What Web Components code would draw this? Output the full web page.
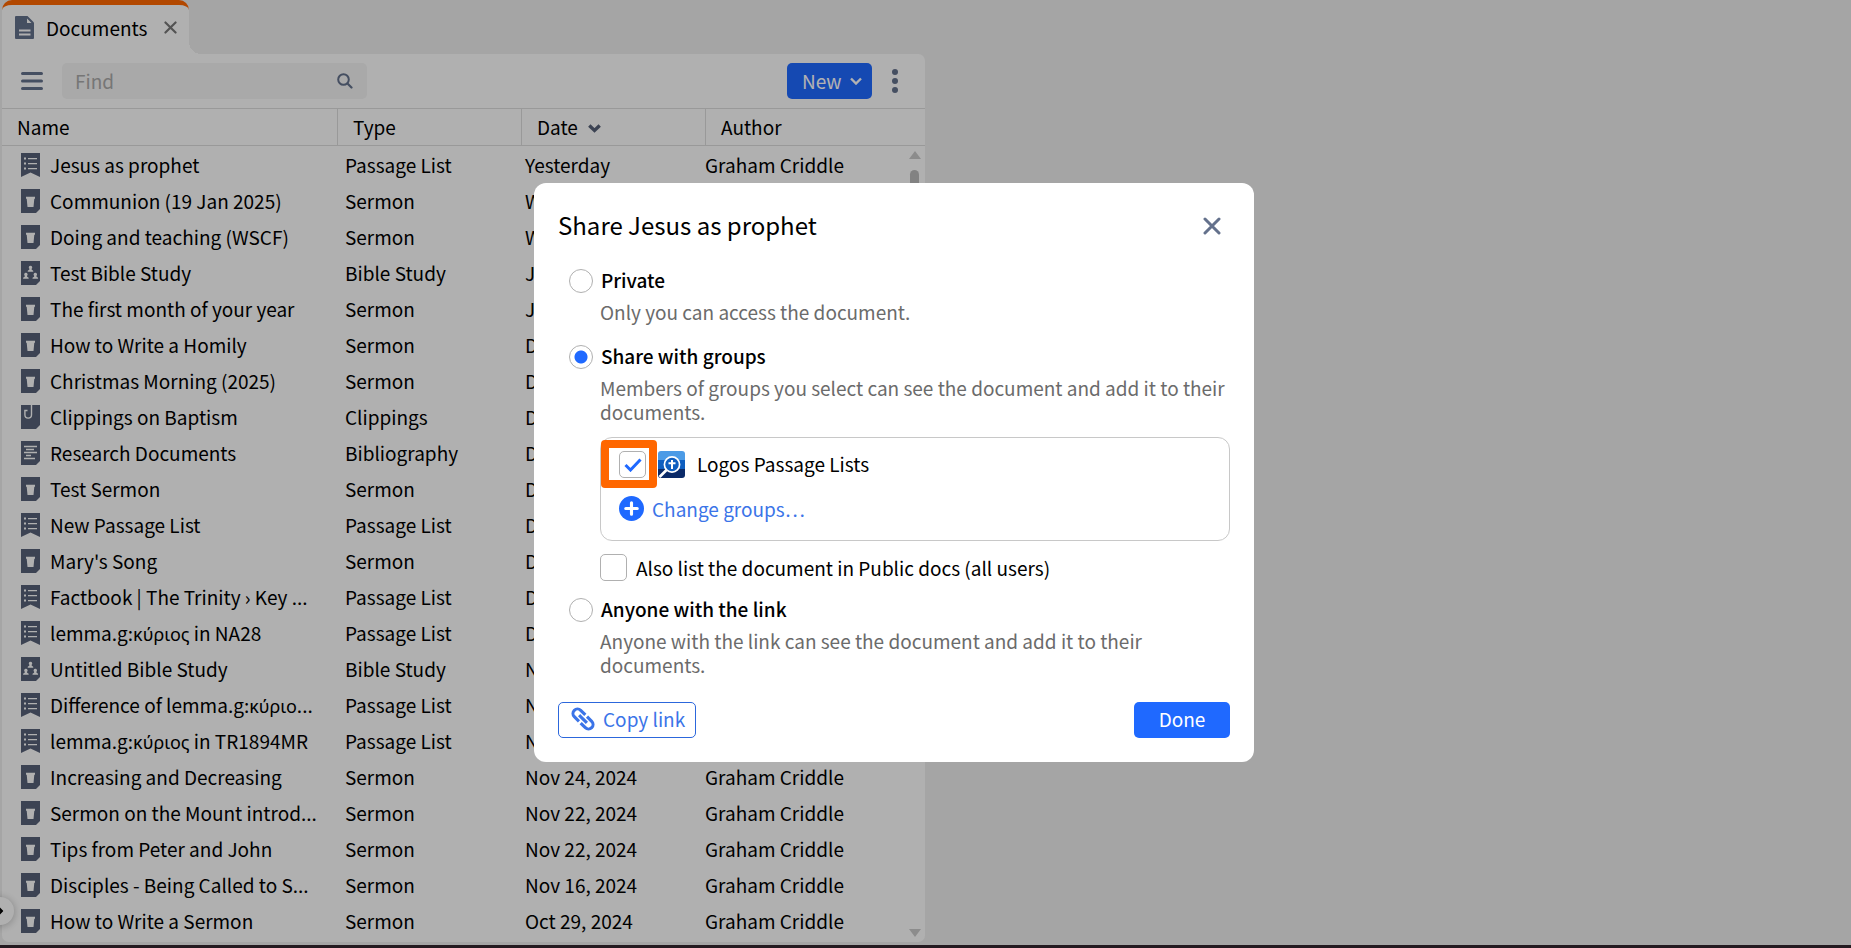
<!DOCTYPE html>
<html lang="en">
<head>
<meta charset="utf-8">
<title>Documents</title>
<style>
  html, body {
    height: 100%;
    margin: 0;
  }

  body {
    font: 19px/24px "Noto Sans CJK SC", "Noto Sans", sans-serif;
    color: #000;
    background: #ededed;
    overflow: hidden;
    --slate: #64718c;
    --slate-dark: #566077;
    --blue: #1f69ff;
    --line: #dcdcdc;
    --panel: #fdfdfd;
  }
</style>
</head>
<body>
<docs-app></docs-app>

<script>
  const icons = {
    document: ['0 0 19 23', `
      <path fill="currentColor" d="M1 0h11.500l6.500 6.500V22a1 1 0 0 1-1 1H1a1 1 0 0 1-1-1V1a1 1 0 0 1 1-1z"/>
      <path fill="#fdfdfd" d="M12 2.500V7h4.500zM4 13.500h11.500v2H4zM4 17.500h11.500v2H4z"/>`],
    passage: ['0 0 19 24', `
      <path fill="currentColor" d="M0 0h19v24l-9.500-4.500L0 24z"/>
      <path fill="#fdfdfd" d="M3 4.500h2v2H3zM7 5h9v1.200H7zM3 9.500h2v2H3zM7 10h9v1.200H7zM3 14.500h2v2H3zM7 15h9v1.200H7z"/>`],
    sermon: ['0 0 19 24', `
      <path fill="currentColor" d="M0 0h19v20l-4 4H0z"/>
      <path fill="#fdfdfd" d="M5 7.800h9v2h-.7L12.500 18h-6L5.700 9.800H5z"/>`],
    study: ['0 0 19 24', `
      <path fill="currentColor" d="M0 0h19v20l-4 4H0z"/>
      <g fill="#fdfdfd">
        <path id="p" d="M9.500 4.800a1.700 1.700 0 0 1 1 3.100l.5 1.200c1 .2 1.300.7 1.300 1.600H6.700c0-.9.300-1.400 1.300-1.600l.5-1.200a1.700 1.700 0 0 1 1-3.100z"/>
        <use href="#p" x="-4.600" y="7"/>
        <use href="#p" x="4.800" y="7"/>
      </g>`],
    clipping: ['0 0 19 24', `
      <path fill="currentColor" d="M0 0h19v20l-4 4H0z"/>
      <path fill="none" stroke="#fdfdfd" stroke-width="1.400" d="M10.500 0v9.800a3.300 3.300 0 0 1-6.600 0V5.500H6.500"/>`],
    bibliography: ['0 0 19 24', `
      <path fill="currentColor" d="M0 0h19v20l-4 4H0z"/>
      <path stroke="#fdfdfd" stroke-width="1.300" d="M3 5.500h13M5 8.500h8M3 11.500h13M5 14.500h5M3 17.500h11"/>`],
    close: ['0 0 18 18', `
      <path fill="none" stroke="currentColor" stroke-width="3" stroke-linecap="round" d="M2 2l14 14M16 2L2 16"/>`],
    menu: ['0 0 22 20', `
      <path stroke="currentColor" stroke-width="3" stroke-linecap="round" d="M1.500 2.500h19M1.500 10h19M1.500 17.500h19"/>`],
    search: ['0 0 16 16', `
      <circle cx="6.500" cy="6.500" r="5.300" fill="none" stroke="currentColor" stroke-width="2"/>
      <path stroke="currentColor" stroke-width="2.200" stroke-linecap="round" d="M10.700 10.700L14.500 14.500"/>`],
    chevron: ['0 0 12 8', `
      <path fill="none" stroke="currentColor" stroke-width="2.400" d="M1 1.500l5 5 5-5"/>`],
    sort: ['0 0 13 9', `
      <path fill="none" stroke="currentColor" stroke-width="3.400" d="M1.300 1.500l5.200 5 5.200-5"/>`],
    dots: ['0 0 6 24', `
      <g fill="currentColor"><circle cx="3" cy="3" r="3"/><circle cx="3" cy="12" r="3"/><circle cx="3" cy="21" r="3"/></g>`],
    plus: ['0 0 24 24', `
      <circle cx="12" cy="12" r="12" fill="currentColor"/>
      <path stroke="#fff" stroke-width="3" stroke-linecap="round" d="M12 6.500v11M6.500 12h11"/>`],
    link: ['0 0 24 24', `
      <g fill="none" stroke="currentColor" stroke-width="3.100" transform="rotate(45 12 12)">
        <path d="M10.800 7.500H4.200a4.500 4.500 0 0 0 0 9h6.600"/>
        <path d="M13.200 7.500h6.600a4.500 4.500 0 0 1 0 9h-6.600"/>
        <path d="M6.500 12h11"/>
      </g>`],
    group: ['0 0 27 27', `
      <clipPath id="c"><rect width="27" height="27" rx="3"/></clipPath>
      <g clip-path="url(#c)">
        <path fill="#4c9be6" d="M0 0h27v9H0z"/>
        <path fill="#0f5fc0" d="M0 9h27v9H0z"/>
        <path fill="#0a2a68" d="M0 18h27v9H0z"/>
        <circle cx="14" cy="13.500" r="7.600" fill="#0f5fc0" stroke="#fff" stroke-width="1.700"/>
        <path stroke="#fff" stroke-width="2.600" d="M8.500 19L1.500 26"/>
        <path stroke="#fff" stroke-width="2" d="M14 9v9M10.500 12.300h7"/>
      </g>`]
  };

  class DocIcon extends HTMLElement {
    connectedCallback() {
      const [box, shape] = icons[this.getAttribute('name')];
      const [, , width, height] = box.split(' ');
      this.attachShadow({ mode: 'open' });
      this.shadowRoot.innerHTML = `
        <style>
          :host { display: inline-block; flex: none; }
          svg { display: block; }
        </style>
        <svg viewBox="${box}" width="${this.getAttribute('width') || width}" height="${this.getAttribute('height') || height}" aria-hidden="true">${shape}</svg>
      `;
    }
  }

  class DocTab extends HTMLElement {
    constructor() {
      super();
      this.attachShadow({ mode: 'open' });
      this.shadowRoot.innerHTML = `
        <style>
          :host {
            display: flex;
            align-items: center;
            box-sizing: border-box;
            height: 54px;
            padding: 0 12px 4px 13px;
            border-top: 5px solid #ff6700;
            border-radius: 10px 10px 0 0;
            background: var(--panel);
            position: relative;
          }
          /* inverse corner where the tab meets the panel */
          :host::after {
            content: "";
            position: absolute;
            left: 100%;
            bottom: 0;
            width: 12px;
            height: 12px;
            background: radial-gradient(circle at 100% 0, transparent 12px, var(--panel) 12px);
          }
          .kind { color: var(--slate); }
          span { margin: 0 17px 0 12px; }
          button {
            padding: 0;
            border: 0;
            background: none;
            color: #777;
            line-height: 0;
          }
        </style>
        <doc-icon class="kind" name="document"></doc-icon>
        <span><slot></slot></span>
        <button aria-label="Close tab"><doc-icon name="close" width="13" height="13"></doc-icon></button>
      `;
    }
  }

  class DocToolbar extends HTMLElement {
    constructor() {
      super();
      this.attachShadow({ mode: 'open' });
      this.shadowRoot.innerHTML = `
        <style>
          :host {
            display: flex;
            align-items: center;
            height: 54px;
            padding: 0 27px 0 19px;
            color: var(--slate);
          }
          button {
            padding: 0;
            border: 0;
            background: none;
            color: inherit;
            font: inherit;
            line-height: 0;
          }
          .find {
            display: flex;
            align-items: center;
            box-sizing: border-box;
            width: 305px;
            height: 36px;
            margin: 0 auto 0 19px;
            padding: 0 14px 0 13px;
            border-radius: 5px;
            background: #f2f2f2;
          }
          input {
            flex: 1;
            min-width: 0;
            padding: 0;
            border: 0;
            outline: 0;
            background: none;
            font: inherit;
          }
          input::placeholder { color: #aaa; }
          .new {
            display: flex;
            align-items: center;
            gap: 8px;
            height: 36px;
            margin-right: 20px;
            padding: 0 10px 0 15px;
            border-radius: 5px;
            background: var(--blue);
            color: #fff;
          }
        </style>
        <button aria-label="Menu"><doc-icon name="menu"></doc-icon></button>
        <label class="find">
          <input type="text" placeholder="Find" aria-label="Find">
          <doc-icon name="search"></doc-icon>
        </label>
        <button class="new">New <doc-icon name="chevron"></doc-icon></button>
        <button aria-label="More"><doc-icon name="dots"></doc-icon></button>
      `;
    }
  }

  const types = {
    passage: 'Passage List',
    sermon: 'Sermon',
    study: 'Bible Study',
    clipping: 'Clippings',
    bibliography: 'Bibliography'
  };

  const docs = [
    ['passage', 'Jesus as prophet', 'Yesterday'],
    ['sermon', 'Communion (19 Jan 2025)', 'Wednesday'],
    ['sermon', 'Doing and teaching (WSCF)', 'Wednesday'],
    ['study', 'Test Bible Study', 'Jan 8, 2025'],
    ['sermon', 'The first month of your year', 'Jan 4, 2025'],
    ['sermon', 'How to Write a Homily', 'Dec 30, 2024'],
    ['sermon', 'Christmas Morning (2025)', 'Dec 24, 2024'],
    ['clipping', 'Clippings on Baptism', 'Dec 20, 2024'],
    ['bibliography', 'Research Documents', 'Dec 18, 2024'],
    ['sermon', 'Test Sermon', 'Dec 17, 2024'],
    ['passage', 'New Passage List', 'Dec 14, 2024'],
    ['sermon', "Mary's Song", 'Dec 12, 2024'],
    ['passage', 'Factbook | The Trinity › Key ...', 'Dec 9, 2024'],
    ['passage', 'lemma.g:κύριος in NA28', 'Dec 3, 2024'],
    ['study', 'Untitled Bible Study', 'Nov 29, 2024'],
    ['passage', 'Difference of lemma.g:κύριο...', 'Nov 27, 2024'],
    ['passage', 'lemma.g:κύριος in TR1894MR', 'Nov 27, 2024'],
    ['sermon', 'Increasing and Decreasing', 'Nov 24, 2024'],
    ['sermon', 'Sermon on the Mount introd...', 'Nov 22, 2024'],
    ['sermon', 'Tips from Peter and John', 'Nov 22, 2024'],
    ['sermon', 'Disciples - Being Called to S...', 'Nov 16, 2024'],
    ['sermon', 'How to Write a Sermon', 'Oct 29, 2024']
  ];

  // the CJK family has no accented Greek, so those words get their own font
  const markGreek = (text) => text.replace(/[\u0370-\u03ff]+/g, '<span lang="el">$&</span>');

  class DocList extends HTMLElement {
    constructor() {
      super();
      this.attachShadow({ mode: 'open' });
      this.shadowRoot.innerHTML = `
        <style>
          :host {
            display: block;
            position: relative;
          }
          table {
            width: 100%;
            table-layout: fixed;
            border-collapse: separate;
            border-spacing: 0;
          }
          .name { width: 335px; }
          .type, .date { width: 184px; }
          th {
            box-sizing: border-box;
            height: 38px;
            padding: 0 15px 1px;
            border: solid var(--line);
            border-width: 1px 0 1px 1px;
            font-weight: normal;
            text-align: left;
          }
          th:first-child { border-left: 0; }
          th doc-icon { margin: 0 0 2px 6px; color: var(--slate-dark); }
          td {
            height: 36px;
            padding: 0;
            white-space: nowrap;
          }
          tbody tr:first-child td { border-top: 1px solid transparent; }
          td:nth-child(2) { padding-left: 8px; }
          td:nth-child(3) { padding-left: 4px; }
          .doc {
            display: flex;
            align-items: center;
            gap: 10px;
            padding-left: 19px;
          }
          .doc doc-icon { color: var(--slate-dark); }
          [lang=el] { font-family: "Noto Sans", sans-serif; font-size: 18px; }
          .scroll {
            position: absolute;
            top: 43px;
            right: 4px;
            bottom: 5px;
            width: 12px;
            display: flex;
            flex-direction: column;
            align-items: center;
            justify-content: space-between;
            color: #c9c9c9;
          }
          .up, .down {
            border: 6px solid transparent;
            border-bottom: 8px solid currentColor;
            border-top: 0;
          }
          .down { transform: rotate(180deg); }
          .thumb {
            width: 9px;
            height: 150px;
            margin: 11px 0 auto;
            border-radius: 5px;
            background: #bbb;
          }
        </style>
        <table>
          <thead>
            <tr>
              <th class="name">Name</th>
              <th class="type">Type</th>
              <th class="date" aria-sort="descending">Date <doc-icon name="sort"></doc-icon></th>
              <th>Author</th>
            </tr>
          </thead>
          <tbody>
            ${docs.map(([kind, title, date]) => `
              <tr>
                <td><div class="doc"><doc-icon name="${kind}"></doc-icon><span>${markGreek(title)}</span></div></td>
                <td>${types[kind]}</td>
                <td>${date}</td>
                <td>Graham Criddle</td>
              </tr>`).join('')}
          </tbody>
        </table>
        <div class="scroll"><div class="up"></div><div class="thumb"></div><div class="down"></div></div>
      `;
    }
  }

  class ShareOption extends HTMLElement {
    connectedCallback() {
      this.attachShadow({ mode: 'open' });
      this.shadowRoot.innerHTML = `
        <style>
          :host { display: block; padding-left: 11px; }
          .head {
            display: flex;
            align-items: center;
            gap: 8px;
            height: 26px;
          }
          label { padding-bottom: 2px; font-weight: 500; }
          input {
            appearance: none;
            flex: none;
            width: 24px;
            height: 24px;
            margin: 0;
            border: 1px solid #b0b0b0;
            border-radius: 50%;
            background: #fff;
          }
          input:checked {
            background: radial-gradient(circle, var(--blue) 6px, #fff 7px);
          }
          .body { padding: 6px 0 0 31px; }
          p { margin: 0; padding-bottom: 4px; color: #6b6b6b; }
        </style>
        <div class="head">
          <input type="radio" id="option" ${this.hasAttribute('checked') ? 'checked' : ''}>
          <label for="option">${this.getAttribute('label')}</label>
        </div>
        <div class="body">
          <p>${this.getAttribute('hint')}</p>
          <slot></slot>
        </div>
      `;
      // radios in separate shadow roots do not group by name
      this.input = this.shadowRoot.querySelector('input');
      this.input.addEventListener('change', () => {
        this.parentNode.querySelectorAll('share-option').forEach((option) => {
          option.input.checked = option === this;
        });
      });
    }
  }

  class CheckBox extends HTMLElement {
    connectedCallback() {
      this.attachShadow({ mode: 'open' });
      this.shadowRoot.innerHTML = `
        <style>
          :host { display: block; }
          label {
            display: flex;
            align-items: center;
          }
          .box {
            display: grid;
            margin-right: var(--check-gap, 9px);
            position: relative;
          }
          input, svg { grid-area: 1 / 1; }
          input {
            appearance: none;
            width: 27px;
            height: 27px;
            margin: 0;
            border: 1px solid #b0b0b0;
            border-radius: 5px;
            background: #fff;
          }
          svg {
            place-self: center;
            pointer-events: none;
            visibility: hidden;
          }
          input:checked + svg { visibility: visible; }
          /* highlight frame laid over the group box */
          :host([marked]) .box::after {
            content: "";
            position: absolute;
            inset: -11px -11px -10px -18px;
            border: 8px solid #ff6700;
            border-radius: 4px;
            pointer-events: none;
          }
        </style>
        <label>
          <span class="box">
            <input type="checkbox" ${this.hasAttribute('checked') ? 'checked' : ''}>
            <svg width="18" height="14" viewBox="0 0 18 14" aria-hidden="true">
              <path fill="none" stroke="#1f69ff" stroke-width="3" d="M1.500 7l5 5L16.500 1.500"/>
            </svg>
          </span>
          <slot></slot>
        </label>
      `;
    }
  }

  class ShareDialog extends HTMLElement {
    constructor() {
      super();
      this.attachShadow({ mode: 'open' });
      this.shadowRoot.innerHTML = `
        <style>
          :host {
            display: block;
            box-sizing: border-box;
            width: 720px;
            padding: 24px;
            border-radius: 12px;
            background: #fff;
          }
          header, footer {
            display: flex;
            align-items: center;
            justify-content: space-between;
          }
          header { height: 38px; padding-right: 9px; }
          h1 { margin: 0; padding-bottom: 2px; font-size: 24px; line-height: 36px; font-weight: normal; }
          button {
            padding: 0;
            border: 0;
            background: none;
            color: var(--blue);
            font: inherit;
          }
          .close { line-height: 0; color: var(--slate); }
          .options {
            display: grid;
            gap: 16px;
            margin: 23px 0 21px;
          }
          .groups {
            box-sizing: border-box;
            height: 104px;
            margin: 9px 0 13px;
            padding: 13px 18px;
            border: 1px solid #c8c8c8;
            border-radius: 12px;
          }
          .groups check-box { --check-gap: 12px; }
          .groups check-box span { margin-left: 12px; padding-bottom: 2px; }
          .change {
            display: flex;
            align-items: center;
            gap: 8px;
            margin-top: 18px;
            color: #3b74e8;
            text-decoration: none;
          }
          .change doc-icon { color: var(--blue); }
          .copy, .done {
            display: flex;
            align-items: center;
            box-sizing: border-box;
            height: 36px;
            border-radius: 5px;
          }
          .copy {
            gap: 8px;
            padding: 0 10px 2px 12px;
            border: 1px solid #2c67dc;
            color: #3b74e8;
          }
          .done {
            justify-content: center;
            width: 96px;
            padding-bottom: 2px;
            background: var(--blue);
            color: #fff;
          }
        </style>
        <header>
          <h1>Share Jesus as prophet</h1>
          <button class="close" aria-label="Close"><doc-icon name="close"></doc-icon></button>
        </header>
        <div class="options">
          <share-option label="Private" hint="Only you can access the document."></share-option>
          <share-option checked label="Share with groups" hint="Members of groups you select can see the document and add it to their documents.">
            <div class="groups">
              <check-box checked marked><doc-icon name="group"></doc-icon><span>Logos Passage Lists</span></check-box>
              <a class="change" href="#groups"><doc-icon name="plus" width="25" height="25"></doc-icon>Change groups…</a>
            </div>
            <check-box>Also list the document in Public docs (all users)</check-box>
          </share-option>
          <share-option label="Anyone with the link" hint="Anyone with the link can see the document and add it to their documents."></share-option>
        </div>
        <footer>
          <button class="copy"><doc-icon name="link"></doc-icon>Copy link</button>
          <button class="done">Done</button>
        </footer>
      `;
    }
  }

  class DocsApp extends HTMLElement {
    constructor() {
      super();
      this.attachShadow({ mode: 'open' });
      this.shadowRoot.innerHTML = `
        <style>
          :host {
            display: flex;
            flex-direction: column;
            height: 100vh;
          }
          main {
            flex: 1;
            min-height: 0;
            display: flex;
            flex-direction: column;
            box-sizing: border-box;
            width: calc(50% - 1px);
            padding: 0 0 3px 2px;
          }
          nav { display: flex; }
          section {
            flex: 1;
            min-height: 0;
            display: flex;
            flex-direction: column;
            border-radius: 0 7px 7px 7px;
            background: var(--panel);
          }
          doc-list { flex: 1; min-height: 0; }
          .taskbar { height: 3px; background: #241a20; }
          .expand {
            position: absolute;
            left: -14px;
            bottom: 23px;
            display: flex;
            align-items: center;
            justify-content: flex-end;
            width: 28px;
            height: 28px;
            padding: 0 9px 0 0;
            border: 0;
            border-radius: 50%;
            background: var(--panel);
            box-shadow: 0 1px 8px #0004;
          }
          .expand doc-icon { transform: rotate(-90deg); }
          .shade {
            position: absolute;
            inset: 0 0 3px;
            display: flex;
            align-items: center;
            justify-content: center;
            /* the dialog centres on the window with the hidden side bar */
            padding-right: 63px;
            background: rgba(0, 0, 0, .3);
          }
        </style>
        <main>
          <nav><doc-tab>Documents</doc-tab></nav>
          <section>
            <doc-toolbar></doc-toolbar>
            <doc-list></doc-list>
          </section>
        </main>
        <div class="taskbar"></div>
        <button class="expand" aria-label="Expand"><doc-icon name="sort" width="9" height="6"></doc-icon></button>
        <div class="shade">
          <share-dialog role="dialog" aria-label="Share Jesus as prophet"></share-dialog>
        </div>
      `;
    }
  }

  customElements.define('doc-icon', DocIcon);
  customElements.define('doc-tab', DocTab);
  customElements.define('doc-toolbar', DocToolbar);
  customElements.define('doc-list', DocList);
  customElements.define('check-box', CheckBox);
  customElements.define('share-option', ShareOption);
  customElements.define('share-dialog', ShareDialog);
  customElements.define('docs-app', DocsApp);
</script>
</body>
</html>
